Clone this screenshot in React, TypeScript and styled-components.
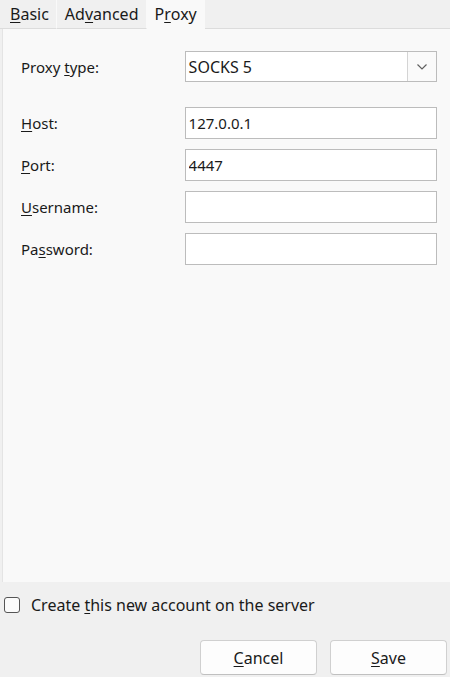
import styled, { createGlobalStyle } from 'styled-components';

const GlobalStyle = createGlobalStyle`
  html, body {
    margin: 0;
    padding: 0;
    background: #f0f0f0;
  }
  body {
    font-family: "Noto Sans", "Open Sans", sans-serif;
    font-size: 15px;
    color: #1a1a1a;
  }
`;

const fields = [
  { label: 'Host:', key: 'H', rest: 'ost:', value: '127.0.0.1' },
  { label: 'Port:', key: 'P', rest: 'ort:', value: '4447' },
  { label: 'Username:', key: 'U', rest: 'sername:', value: '' },
];

const App = () => {
  return (
    <Dialog>
      <GlobalStyle />
      <TabStrip>
        <Tab>
          <u>B</u>asic
        </Tab>
        <Tab>
          Ad<u>v</u>anced
        </Tab>
        <Tab $active>
          P<u>r</u>oxy
        </Tab>
        <TabFill />
      </TabStrip>
      <Panel>
        <Row>
          <Label>
            Proxy <u>t</u>ype:
          </Label>
          <Select>
            <SelectValue>SOCKS 5</SelectValue>
            <SelectButton>
              <svg width="12" height="8" viewBox="0 0 12 8">
                <path d="M1.5 1.5 L6 6 L10.5 1.5" fill="none" stroke="#606060" strokeWidth="1.2" />
              </svg>
            </SelectButton>
          </Select>
        </Row>
        <Fields>
          {fields.map((f) => (
            <Row key={f.label}>
              <Label>
                <u>{f.key}</u>
                {f.rest}
              </Label>
              <TextBox defaultValue={f.value} />
            </Row>
          ))}
          <Row>
            <Label>
              Pa<u>s</u>sword:
            </Label>
            <TextBox type="text" defaultValue="" />
          </Row>
        </Fields>
      </Panel>
      <CheckRow>
        <CheckBox />
        <span>
          Create <u>t</u>his new account on the server
        </span>
      </CheckRow>
      <Buttons>
        <Button>
          <u>C</u>ancel
        </Button>
        <Button>
          <u>S</u>ave
        </Button>
      </Buttons>
    </Dialog>
  );
};

export default App;

const Dialog = styled.div`
  width: 450px;
  height: 677px;
  display: flex;
  flex-direction: column;
  background: #f0f0f0;
  overflow: hidden;

  u {
    text-decoration-thickness: 1px;
    text-underline-offset: 2px;
  }
`;

const TabStrip = styled.div`
  display: flex;
  height: 29px;
  flex-shrink: 0;
`;

const Tab = styled.div<{ $active?: boolean }>`
  display: flex;
  align-items: center;
  padding: 0 7px 0 8px;
  height: 100%;
  box-sizing: border-box;
  background: ${(p) => (p.$active ? '#f9f9f9' : '#f0f0f0')};
  border-right: 1px solid #f9f9f9;
  border-bottom: 1px solid ${(p) => (p.$active ? '#f9f9f9' : '#dcdcdc')};
  font-size: 16px;
  color: #1a1a1a;
  &:first-child {
    padding-left: 10px;
  }
`;

const TabFill = styled.div`
  flex: 1;
  border-bottom: 1px solid #dcdcdc;
`;

const Panel = styled.div`
  height: 553px;
  margin-left: 2px;
  background: #f9f9f9;
  border-left: 1px solid #e4e4e4;
  padding: 22px 13px 0 18px;
  box-sizing: border-box;
  flex-shrink: 0;
`;

const Fields = styled.div`
  display: flex;
  flex-direction: column;
  gap: 10px;
  margin-top: 25px;
`;

const Row = styled.div`
  display: flex;
  align-items: center;
`;

const Label = styled.div`
  width: 164px;
  font-size: 15px;
  color: #1a1a1a;
`;

const Select = styled.div`
  display: flex;
  width: 253px;
  height: 31px;
  box-sizing: border-box;
  border: 1px solid #bcbcbc;
  background: #ffffff;
`;

const SelectValue = styled.div`
  flex: 1;
  display: flex;
  align-items: center;
  padding-left: 3px;
  font-size: 16px;
`;

const SelectButton = styled.div`
  width: 28px;
  display: flex;
  align-items: center;
  justify-content: center;
  border-left: 1px solid #d4d4d4;
  background: #fafafa;
`;

const TextBox = styled.input`
  width: 253px;
  height: 32px;
  box-sizing: border-box;
  border: 1px solid #bcbcbc;
  background: #ffffff;
  padding: 0 3px;
  font-family: inherit;
  font-size: 15px;
  color: #1a1a1a;
  outline: none;
`;

const CheckRow = styled.label`
  display: flex;
  align-items: center;
  gap: 11px;
  margin: 12px 0 0 4px;
  font-size: 16px;
`;

const CheckBox = styled.span`
  width: 13px;
  height: 13px;
  border: 1.5px solid #555;
  border-radius: 3px;
  background: #fbfbfb;
  flex-shrink: 0;
  box-sizing: content-box;
  padding: 0.5px;
`;

const Buttons = styled.div`
  display: flex;
  justify-content: flex-end;
  gap: 13px;
  margin-top: auto;
  padding: 0 3px 2px 0;
`;

const Button = styled.button`
  width: 117px;
  height: 35px;
  border: 1px solid #d0d0d0;
  border-bottom-color: #c0c0c0;
  border-radius: 4px;
  background: #fdfdfd;
  font-family: inherit;
  font-size: 16px;
  color: #1a1a1a;
  padding: 0;
`;
